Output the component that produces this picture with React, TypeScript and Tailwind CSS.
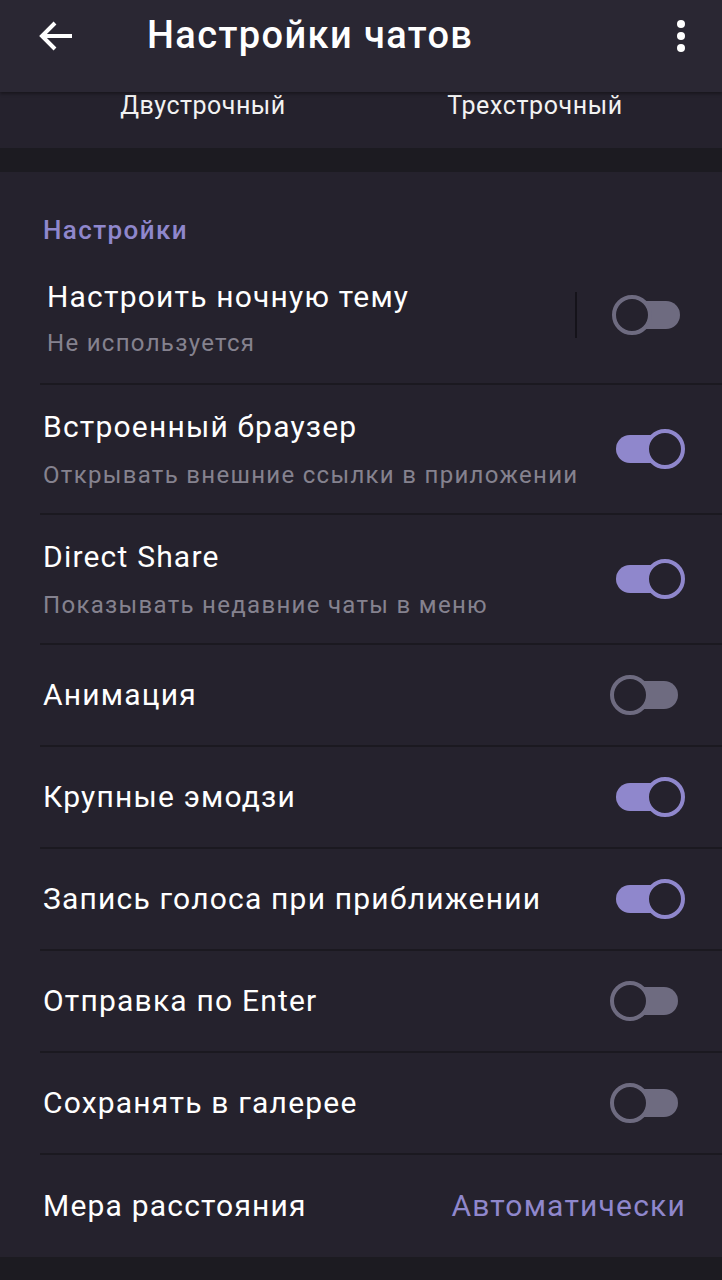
import React from "react";

const ACCENT = "#8f87cc";

function Toggle({ on, className = "" }: { on: boolean; className?: string }) {
  return (
    <div className={`relative h-[40px] w-[70px] shrink-0 ${className}`}>
      <div
        className={`absolute top-[6px] h-[28px] rounded-full ${
          on ? "left-[1px] w-[60px] bg-[#8f87cc]" : "left-[10px] w-[58px] bg-[#6e6b80]"
        }`}
      />
      <div
        className={`absolute top-0 h-[40px] w-[40px] rounded-full border-[4px] bg-[#25222d] ${
          on ? "right-0 border-[#8f87cc]" : "left-0 border-[#6e6b80]"
        }`}
      />
    </div>
  );
}

function Row({
  title,
  sub,
  on,
}: {
  title: string;
  sub?: string;
  on: boolean;
}) {
  return (
    <div
      className={`flex items-center ml-[40px] pl-[3px] border-b-2 border-[#1b1920] ${
        sub ? "h-[130px]" : "h-[102px]"
      }`}
    >
      <div className="flex-1 min-w-0">
        <div className="text-[30px] leading-[36px] tracking-[1.2px] text-white whitespace-nowrap">{title}</div>
        {sub && (
          <div className="mt-[16px] text-[24px] leading-[28px] tracking-[1.3px] text-[#85828f] whitespace-nowrap">
            {sub}
          </div>
        )}
      </div>
      <Toggle on={on} className={on ? "mr-[37px]" : "mr-[42px]"} />
    </div>
  );
}

export default function App() {
  return (
    <div
      className="w-[722px] h-[1280px] overflow-hidden bg-[#1c1b21] text-white"
      style={{ fontFamily: "Roboto, 'Noto Sans', sans-serif" }}
    >
      {/* Header */}
      <div className="relative z-10 h-[92px] bg-[#2a2733] flex items-center shadow-[0_2px_3px_rgba(0,0,0,0.35)]">
        <div className="w-[147px] h-full flex items-center pl-[38px] pb-[20px]">
          <svg width="36" height="32" viewBox="0 0 36 32" fill="none">
            <path
              d="M34 16H4M17 3L4 16l13 13"
              stroke="white"
              strokeWidth="4"
              strokeLinecap="butt"
              strokeLinejoin="miter"
            />
          </svg>
        </div>
        <div className="flex-1 text-[38px] font-medium leading-none pb-[22px] tracking-[1.4px] whitespace-nowrap">
          Настройки чатов
        </div>
        <div className="w-[82px] h-full flex flex-col items-center justify-start pt-[20px] gap-[4px]">
          <div className="w-[8px] h-[8px] rounded-full bg-white" />
          <div className="w-[8px] h-[8px] rounded-full bg-white" />
          <div className="w-[8px] h-[8px] rounded-full bg-white" />
        </div>
      </div>

      {/* Message lines selector */}
      <div className="h-[56px] bg-[#25222d] flex items-start">
        <div className="w-[406px] text-center text-[25px] leading-[28px] tracking-[0.5px] text-[#f2f2f2]">
          Двустрочный
        </div>
        <div className="w-[258px] text-center text-[25px] leading-[28px] tracking-[0.6px] text-[#f2f2f2]">
          Трехстрочный
        </div>
      </div>

      <div className="h-[24px]" />

      {/* Settings section */}
      <div className="bg-[#25222d]">
        <div className="pt-[42px] pl-[43px] text-[26px] leading-[32px] font-medium tracking-[1.4px] text-[#8f87cc]">
          Настройки
        </div>

        {/* Night theme */}
        <div className="flex items-center ml-[40px] pl-[7px] h-[139px] border-b-2 border-[#1b1920]">
          <div className="flex-1 min-w-0 pt-[6px]">
            <div className="text-[30px] leading-[36px] tracking-[1.2px] text-white whitespace-nowrap">
              Настроить ночную тему
            </div>
            <div className="mt-[14px] text-[24px] leading-[28px] tracking-[1.3px] text-[#85828f]">
              Не используется
            </div>
          </div>
          <div className="w-[2px] h-[46px] bg-[#15131a] mr-[35px]" />
          <Toggle on={false} className="mr-[40px]" />
        </div>

        <Row title="Встроенный браузер" sub="Открывать внешние ссылки в приложении" on />
        <Row title="Direct Share" sub="Показывать недавние чаты в меню" on />
        <Row title="Анимация" on={false} />
        <Row title="Крупные эмодзи" on />
        <Row title="Запись голоса при приближении" on />
        <Row title="Отправка по Enter" on={false} />
        <Row title="Сохранять в галерее" on={false} />

        <div className="flex items-center ml-[40px] pl-[3px] h-[102px]">
          <div className="flex-1 text-[30px] leading-[36px] tracking-[1.2px] text-white whitespace-nowrap">
            Мера расстояния
          </div>
          <div className="mr-[36px] text-[30px] leading-[36px] tracking-[1.2px]" style={{ color: ACCENT }}>
            Автоматически
          </div>
        </div>
      </div>
    </div>
  );
}
